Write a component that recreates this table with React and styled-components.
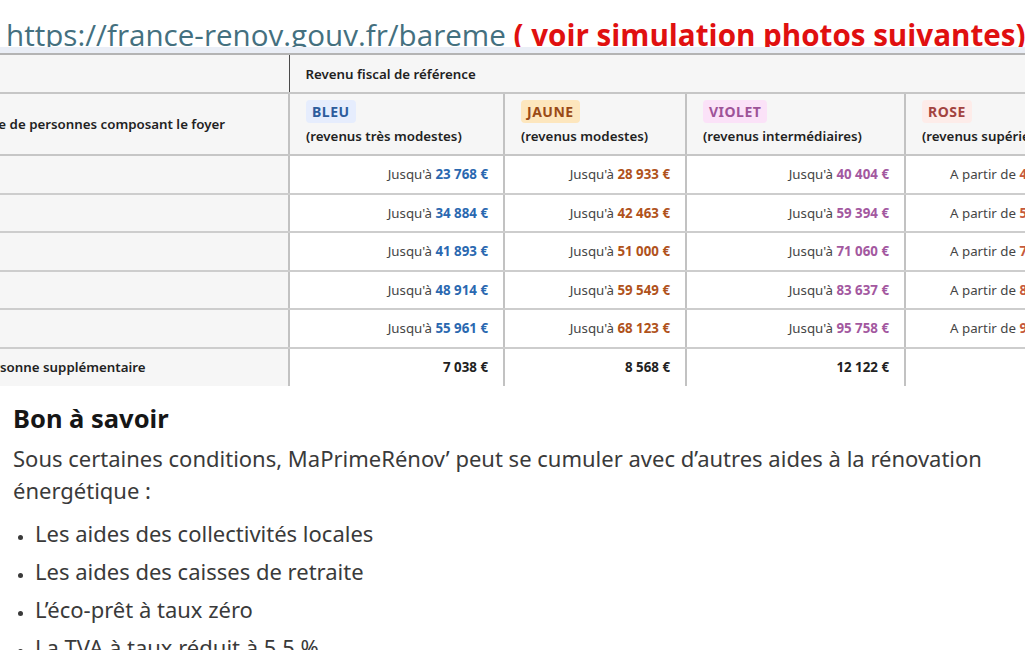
import React from 'react';
import styled, { createGlobalStyle } from 'styled-components';

const GlobalStyle = createGlobalStyle`
  html, body {
    margin: 0;
    padding: 0;
    background: #ffffff;
    overflow: hidden;
  }
`;

const tiers = [
  { key: 'bleu', label: 'BLEU', sub: '(revenus très modestes)', bg: '#e6edfd', fg: '#2d5c9c', amount: '#2a68b0' },
  { key: 'jaune', label: 'JAUNE', sub: '(revenus modestes)', bg: '#fde6bd', fg: '#9a4a16', amount: '#b0521b' },
  { key: 'violet', label: 'VIOLET', sub: '(revenus intermédiaires)', bg: '#fbe2f8', fg: '#9e5398', amount: '#a3589f' },
  { key: 'rose', label: 'ROSE', sub: '(revenus supérieurs)', bg: '#fdece9', fg: '#a3433f', amount: '#c65a3c' }
];

const rows = [
  { people: '1', values: ["Jusqu'à", '23 768 €', "Jusqu'à", '28 933 €', "Jusqu'à", '40 404 €', 'A partir de', '40 405 €'] },
  { people: '2', values: ["Jusqu'à", '34 884 €', "Jusqu'à", '42 463 €', "Jusqu'à", '59 394 €', 'A partir de', '59 395 €'] },
  { people: '3', values: ["Jusqu'à", '41 893 €', "Jusqu'à", '51 000 €', "Jusqu'à", '71 060 €', 'A partir de', '71 061 €'] },
  { people: '4', values: ["Jusqu'à", '48 914 €', "Jusqu'à", '59 549 €', "Jusqu'à", '83 637 €', 'A partir de', '83 638 €'] },
  { people: '5', values: ["Jusqu'à", '55 961 €', "Jusqu'à", '68 123 €', "Jusqu'à", '95 758 €', 'A partir de', '95 759 €'] }
];

const extra = ['7 038 €', '8 568 €', '12 122 €', ''];

const widths = [348, 215, 182, 219, 182];

const App = () => (
  <>
    <GlobalStyle />
    <Page>
      <TitleBar>
        <Link>https://france-renov.gouv.fr/bareme</Link>{' '}
        <Note>( voir simulation photos suivantes)</Note>
      </TitleBar>
      <Strip />
      <TableClip>
        <Table>
          <colgroup>
            {widths.map((w, i) => (
              <col key={i} style={{ width: w }} />
            ))}
          </colgroup>
          <thead>
            <tr>
              <LabelHead $h={39} />
              <GroupHead colSpan={4}>Revenu fiscal de référence</GroupHead>
            </tr>
            <tr>
              <LabelHead $h={62}>Nombre de personnes composant le foyer</LabelHead>
              {tiers.map(t => (
                <TierHead key={t.key}>
                  <Pill $bg={t.bg} $fg={t.fg}>{t.label}</Pill>
                  <TierSub>{t.sub}</TierSub>
                </TierHead>
              ))}
            </tr>
          </thead>
          <tbody>
            {rows.map(r => (
              <tr key={r.people}>
                <LabelCell>{r.people}</LabelCell>
                {tiers.map((t, i) => (
                  <ValueCell key={t.key}>
                    {r.values[i * 2]} <Amount $c={t.amount}>{r.values[i * 2 + 1]}</Amount>
                  </ValueCell>
                ))}
              </tr>
            ))}
            <tr>
              <LabelCell $strong>Par personne supplémentaire</LabelCell>
              {extra.map((v, i) => (
                <ValueCell key={i}>
                  <Amount $c="#222222">{v}</Amount>
                </ValueCell>
              ))}
            </tr>
          </tbody>
        </Table>
      </TableClip>
      <Info>
        <Heading>Bon à savoir</Heading>
        <Text>
          Sous certaines conditions, MaPrimeRénov’ peut se cumuler avec d’autres aides à la rénovation
          énergétique :
        </Text>
        <List>
          <li>Les aides des collectivités locales</li>
          <li>Les aides des caisses de retraite</li>
          <li>L’éco-prêt à taux zéro</li>
          <li>La TVA à taux réduit à 5,5 %</li>
        </List>
      </Info>
    </Page>
  </>
);

const Page = styled.div`
  width: 1025px;
  height: 650px;
  overflow: hidden;
  background: #ffffff;
`;

const TitleBar = styled.div`
  height: 47px;
  overflow: hidden;
  box-sizing: border-box;
  padding: 15px 0 0 6px;
  white-space: nowrap;
  font-family: 'Open Sans', 'Noto Sans', sans-serif;
  font-size: 29.6px;
  line-height: 40px;
`;

const Link = styled.span`
  color: #44707f;
`;

const Note = styled.span`
  color: #e01010;
  font-weight: 700;
`;

const Strip = styled.div`
  height: 6px;
  background: #eaeef6;
`;

const TableClip = styled.div`
  overflow: hidden;
`;

const Table = styled.table`
  margin-left: -59px;
  border-collapse: collapse;
  table-layout: fixed;
  width: 1146px;
  font-family: 'Noto Sans', sans-serif;
  font-size: 13.3px;
  color: #454545;
  border-top: 2px solid #b4b4b4;
`;

const LabelHead = styled.th`
  height: ${p => p.$h}px;
  box-sizing: border-box;
  padding: 0 12px;
  text-align: left;
  font-weight: 600;
  color: #222222;
  background: #f6f6f6;
  border-bottom: 2px solid #c6c6c6;
  border-right: 1px solid #4a4a4a;
  white-space: nowrap;
`;

const GroupHead = styled.th`
  padding: 0 16px;
  text-align: left;
  font-weight: 600;
  color: #222222;
  background: #f6f6f6;
  border-bottom: 2px solid #c6c6c6;
`;

const TierHead = styled.th`
  padding: 6px 16px 0;
  text-align: left;
  vertical-align: top;
  font-weight: 600;
  color: #222222;
  background: #f6f6f6;
  border-bottom: 2px solid #c6c6c6;
  border-left: 2px solid #c2c2c2;
  white-space: nowrap;
`;

const Pill = styled.span`
  display: inline-block;
  padding: 1px 6px;
  border-radius: 4px;
  background: ${p => p.$bg};
  color: ${p => p.$fg};
  font-size: 14px;
  line-height: 21px;
  letter-spacing: 0.5px;
  font-weight: 700;
`;

const TierSub = styled.div`
  margin-top: 4px;
  font-size: 13.3px;
  font-weight: 600;
`;

const LabelCell = styled.td`
  height: 38.5px;
  box-sizing: border-box;
  padding: 0 12px;
  background: #f6f6f6;
  border-bottom: 2px solid #cdcdcd;
  border-right: 1px solid #4a4a4a;
  font-weight: ${p => (p.$strong ? 600 : 400)};
  color: #222222;
  white-space: nowrap;
  tr:last-child > & {
    border-bottom: none;
  }
`;

const ValueCell = styled.td`
  padding: 0 15px;
  text-align: right;
  background: #ffffff;
  border-bottom: 2px solid #cdcdcd;
  border-left: 2px solid #c2c2c2;
  white-space: nowrap;
  tr:last-child > & {
    border-bottom: none;
  }
`;

const Amount = styled.span`
  color: ${p => p.$c};
  font-weight: 700;
`;

const Info = styled.section`
  padding: 16px 13px 0;
  width: 1025px;
  box-sizing: border-box;
  font-family: 'Noto Sans', sans-serif;
  color: #3a3a3a;
`;

const Heading = styled.h2`
  margin: 0 0 8px;
  font-size: 25.5px;
  line-height: 32px;
  font-weight: 700;
  color: #161616;
`;

const Text = styled.p`
  margin: 0;
  font-size: 22px;
  line-height: 32px;
`;

const List = styled.ul`
  margin: 8px 0 0;
  padding-left: 22px;
  font-size: 22px;
  line-height: 38px;
  li::marker {
    font-size: 15px;
  }
`;

export default App;
